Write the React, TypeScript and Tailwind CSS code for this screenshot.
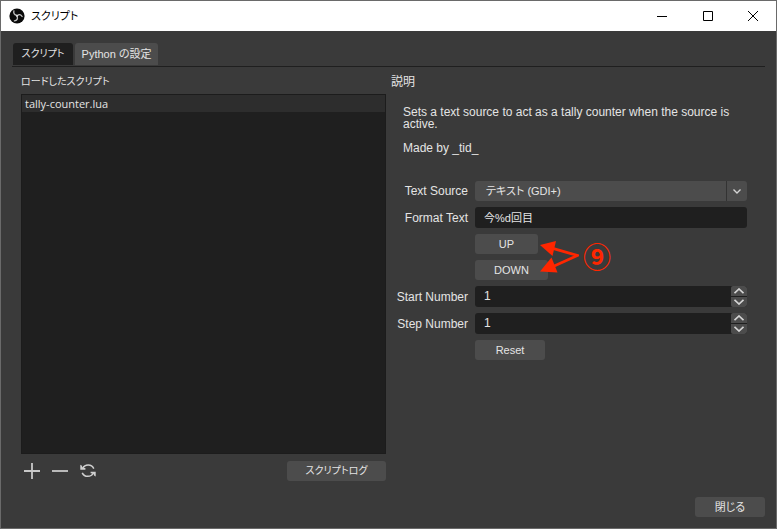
import { useState } from 'react'
import type { ReactNode } from 'react'
import clsx from 'clsx'

const TABS = ['スクリプト', 'Python の設定']
const SCRIPTS = ['tally-counter.lua']

const UI_FONT = "font-['Liberation_Sans','Noto_Sans_CJK_JP',sans-serif] [font-feature-settings:'palt']"
const BUTTON = 'h-5 rounded-[3px] bg-[#4c4c4c] text-center leading-5 hover:bg-[#5a5a5a]'

function ObsLogo() {
  return (
    <svg viewBox="0 0 16 16" className="h-4 w-4" aria-hidden="true">
      <circle cx="8" cy="8" r="7.6" fill="#0a0a0a" />
      <g fill="none" stroke="#c4c4c4" strokeWidth="1.3" strokeLinecap="round">
        <path d="M4.9 2.9C4.3 5.2 5.4 7 7.9 7.3" />
        <path d="M13.1 8.5C11.9 6.4 9.8 6 8.3 7.9" />
        <path d="M5.4 12.8C8 12.6 9.2 10.6 8 8.2" />
      </g>
      <circle cx="8" cy="7.8" r="1" fill="#e4e4e4" />
    </svg>
  )
}

function RefreshIcon() {
  return (
    <svg viewBox="0 0 16 16" className="h-4 w-4" fill="none" stroke="#d0d0d0" strokeWidth="1.5" aria-hidden="true">
      <path d="M2.6 5.4A6.3 6.3 0 0 1 13.8 5.6" />
      <path d="M13.4 10A6.3 6.3 0 0 1 2.2 9.8" />
      <path d="M0.3 1.8L1.7 2.6L2.5 4.7L5.4 5.1V6.7H0.3Z" fill="#d0d0d0" stroke="none" />
      <path d="M15.7 13.6L14.3 12.8L13.5 10.7L10.6 10.3V8.7H15.7Z" fill="#d0d0d0" stroke="none" />
    </svg>
  )
}

function Chevron({ up = false }: { up?: boolean }) {
  return (
    <svg viewBox="0 0 10 6" className="h-[6px] w-[10px]" fill="none" stroke="#d4d4d4" strokeWidth="1.7" aria-hidden="true">
      <path d={up ? 'M0.5 5.2L5 1L9.5 5.2' : 'M0.5 0.8L5 5L9.5 0.8'} />
    </svg>
  )
}

function FormRow({ id, label, children }: { id: string; label: string; children: ReactNode }) {
  return (
    <div className="flex items-center gap-[7px]">
      <label htmlFor={id} className="w-[72px] shrink-0 whitespace-nowrap text-right">
        {label}
      </label>
      {children}
    </div>
  )
}

function SpinBox({ id, value, onChange }: { id: string; value: number; onChange: (v: number) => void }) {
  return (
    <div className="flex h-[21px] min-w-0 flex-1 overflow-hidden rounded-[3px] bg-[#1f1f1f]">
      <input
        id={id}
        type="number"
        value={value}
        onChange={e => onChange(Number(e.target.value))}
        className="min-w-0 flex-1 appearance-none bg-transparent px-[9px] pb-[2px] outline-none [appearance:textfield] [&::-webkit-inner-spin-button]:appearance-none"
      />
      <div className="flex w-4 flex-col gap-px">
        <button
          type="button"
          aria-label="Increase"
          onClick={() => onChange(value + 1)}
          className="flex flex-1 items-center justify-center rounded-t-[2px] bg-[#4c4c4c]"
        >
          <Chevron up />
        </button>
        <button
          type="button"
          aria-label="Decrease"
          onClick={() => onChange(value - 1)}
          className="flex flex-1 items-center justify-center rounded-b-[2px] bg-[#4c4c4c]"
        >
          <Chevron />
        </button>
      </div>
    </div>
  )
}

function Callout() {
  return (
    <div className="pointer-events-none absolute left-16 top-1 flex items-center gap-1 text-[#ff2600]">
      <svg viewBox="0 0 40 36" className="h-9 w-10" aria-hidden="true">
        <path d="M12 9.8L38.5 17.5L13 29" fill="none" stroke="currentColor" strokeWidth="2.8" />
        <path d="M1 7L17 3L13.5 18Z" fill="currentColor" />
        <path d="M1 33.5L12.5 19.5L18.5 34.5Z" fill="currentColor" />
      </svg>
      <span className="font-['Noto_Sans_CJK_JP',sans-serif] text-[28px] font-bold leading-9">⑨</span>
    </div>
  )
}

export default function App() {
  const [tab, setTab] = useState(0)
  const [format, setFormat] = useState('今%d回目')
  const [start, setStart] = useState(1)
  const [step, setStep] = useState(1)

  return (
    <div className={clsx('flex min-h-screen flex-col border border-[#6a6a6a] bg-[#3a3a3a] text-[12px] leading-3 text-[#e4e4e4]', UI_FONT)}>
      {/* Title bar */}
      <header className="flex h-[30px] items-center bg-white pl-2 text-black">
        <ObsLogo />
        <h1 className="ml-[6px] flex-1 text-[11px] leading-4">スクリプト</h1>
        <button type="button" aria-label="Minimize" className="flex h-full w-[46px] items-center justify-center">
          <svg viewBox="0 0 10 10" className="h-[10px] w-[10px]" stroke="currentColor">
            <path d="M0 5.5H10" />
          </svg>
        </button>
        <button type="button" aria-label="Maximize" className="flex h-full w-[45px] items-center justify-center">
          <svg viewBox="0 0 10 10" className="h-[10px] w-[10px]" fill="none" stroke="currentColor">
            <path d="M0.5 0.5H9.5V9.5H0.5Z" />
          </svg>
        </button>
        <button type="button" aria-label="Close" className="flex h-full w-[46px] items-center justify-center">
          <svg viewBox="0 0 10 10" className="h-[10px] w-[10px]" stroke="currentColor">
            <path d="M0 0L10 10M10 0L0 10" />
          </svg>
        </button>
      </header>

      <main className="flex flex-1 flex-col px-[11px] pb-[11px] pt-3">
        <div role="tablist" className="flex gap-[2px] border-b border-[#1f1f1f] pb-px pl-px">
          {TABS.map((name, i) => (
            <button
              key={name}
              type="button"
              role="tab"
              aria-selected={tab === i}
              onClick={() => setTab(i)}
              className={clsx(
                'h-[22px] rounded-t-[3px]',
                i === 0 ? 'w-[60px] text-[10px]' : 'w-[83px] text-[11px]',
                tab === i ? 'bg-[#1f1f1f]' : 'bg-[#4c4c4c]',
              )}
            >
              {name}
            </button>
          ))}
        </div>

        <div className="grid flex-1 grid-cols-2 gap-[5px] px-[9px] pt-[7px]">
          {/* Loaded scripts */}
          <section className="flex flex-col">
            <h2 className="mb-1 text-[10px] leading-4">ロードしたスクリプト</h2>
            <ul className="flex-1 border border-[#1c1c1c] bg-[#1f1f1f] font-['Open_Sans',sans-serif] text-[11px]">
              {SCRIPTS.map(name => (
                <li key={name} className="h-[17px] bg-[#2d2d2d] px-[3px] leading-[17px]">
                  {name}
                </li>
              ))}
            </ul>
            <div className="flex items-center pt-[7px]">
              <div className="flex gap-3 pl-[3px]">
                <button type="button" aria-label="Add script">
                  <svg viewBox="0 0 16 16" className="h-4 w-4" stroke="#c8c8c8" strokeWidth="1.8">
                    <path d="M0 8H16M8 0V16" />
                  </svg>
                </button>
                <button type="button" aria-label="Remove script">
                  <svg viewBox="0 0 16 16" className="h-4 w-4" stroke="#c8c8c8" strokeWidth="1.8">
                    <path d="M0 8H16" />
                  </svg>
                </button>
                <button type="button" aria-label="Reload scripts">
                  <RefreshIcon />
                </button>
              </div>
              <button type="button" className={clsx(BUTTON, 'ml-auto w-[99px] text-[10px]')}>
                スクリプトログ
              </button>
            </div>
          </section>

          {/* Script description and properties */}
          <section className="pr-[9px]">
            <h2 className="leading-4">説明</h2>
            <div className="pl-3 pt-4">
              <p>Sets a text source to act as a tally counter when the source is active.</p>
              <p className="pt-3">Made by _tid_</p>
            </div>

            <form className="flex flex-col gap-[6px] pl-[5px] pt-[27px]" onSubmit={e => e.preventDefault()}>
              <FormRow id="source" label="Text Source">
                <div className="relative min-w-0 flex-1">
                  <select id="source" className="block h-5 w-full appearance-none rounded-[3px] bg-[#4c4c4c] pl-[11px] pr-6 text-[11px] outline-none">
                    <option>テキスト (GDI+)</option>
                  </select>
                  <span className="pointer-events-none absolute inset-y-0 right-0 flex w-[21px] items-center justify-center border-l border-[#333333]">
                    <svg viewBox="0 0 8 5" className="h-[5px] w-2" fill="none" stroke="#d4d4d4" strokeWidth="1.4" aria-hidden="true">
                      <path d="M0.5 0.5L4 4L7.5 0.5" />
                    </svg>
                  </span>
                </div>
              </FormRow>
              <FormRow id="format" label="Format Text">
                <input
                  id="format"
                  type="text"
                  value={format}
                  onChange={e => setFormat(e.target.value)}
                  className="h-[21px] min-w-0 flex-1 rounded-[3px] bg-[#1f1f1f] px-[9px] pb-[2px] text-[11px] outline-none"
                />
              </FormRow>
              <div className="relative ml-[79px] flex flex-col items-start gap-[6px] text-[11px]">
                <button type="button" className={clsx(BUTTON, 'w-[63px]')}>UP</button>
                <button type="button" className={clsx(BUTTON, 'w-[73px]')}>DOWN</button>
                <Callout />
              </div>
              <FormRow id="start" label="Start Number">
                <SpinBox id="start" value={start} onChange={setStart} />
              </FormRow>
              <FormRow id="step" label="Step Number">
                <SpinBox id="step" value={step} onChange={setStep} />
              </FormRow>
              <button type="button" className={clsx(BUTTON, 'ml-[79px] w-[70px] text-[11px]')}>Reset</button>
            </form>
          </section>
        </div>

        <footer className="flex justify-end pt-4">
          <button type="button" className={clsx(BUTTON, 'w-[70px] text-[11px]')}>閉じる</button>
        </footer>
      </main>
    </div>
  )
}
